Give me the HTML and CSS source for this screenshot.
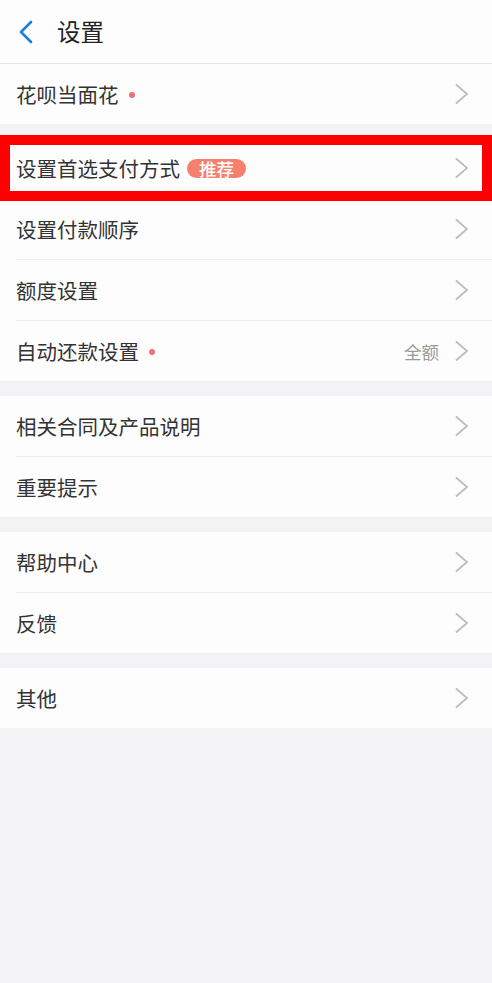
FILE: index.html
```html
<!DOCTYPE html>
<html lang="zh-CN">
<head>
<meta charset="utf-8">
<title>设置</title>
<link rel="stylesheet" href="styles.css">
</head>
<body>
<header class="topbar">
  <svg class="back" width="16" height="24" viewBox="0 0 16 24"><polyline points="13,2 3,12 13,22" fill="none" stroke="#1a7fe0" stroke-width="2.6" stroke-linecap="round" stroke-linejoin="round"/></svg>
  <h1 class="title">设置</h1>
</header>

<section class="group">
  <div class="row"><span class="label">花呗当面花</span><span class="dot"></span><span class="spacer"></span><svg class="chev" width="14" height="22" viewBox="0 0 14 22"><polyline points="1,1.5 12,11 1,20.5" fill="none" stroke="#bdbdbd" stroke-width="1.8"/></svg></div>
</section>

<section class="group">
  <div class="row highlighted"><span class="label">设置首选支付方式</span><span class="badge">推荐</span><span class="spacer"></span><svg class="chev" width="14" height="22" viewBox="0 0 14 22"><polyline points="1,1.5 12,11 1,20.5" fill="none" stroke="#bdbdbd" stroke-width="1.8"/></svg><span class="mark"></span></div>
  <div class="row"><span class="label">设置付款顺序</span><span class="spacer"></span><svg class="chev" width="14" height="22" viewBox="0 0 14 22"><polyline points="1,1.5 12,11 1,20.5" fill="none" stroke="#bdbdbd" stroke-width="1.8"/></svg></div>
  <div class="row"><span class="label">额度设置</span><span class="spacer"></span><svg class="chev" width="14" height="22" viewBox="0 0 14 22"><polyline points="1,1.5 12,11 1,20.5" fill="none" stroke="#bdbdbd" stroke-width="1.8"/></svg></div>
  <div class="row"><span class="label">自动还款设置</span><span class="dot"></span><span class="spacer"></span><span class="value">全额</span><svg class="chev" width="14" height="22" viewBox="0 0 14 22"><polyline points="1,1.5 12,11 1,20.5" fill="none" stroke="#bdbdbd" stroke-width="1.8"/></svg></div>
</section>

<section class="group">
  <div class="row"><span class="label">相关合同及产品说明</span><span class="spacer"></span><svg class="chev" width="14" height="22" viewBox="0 0 14 22"><polyline points="1,1.5 12,11 1,20.5" fill="none" stroke="#bdbdbd" stroke-width="1.8"/></svg></div>
  <div class="row"><span class="label">重要提示</span><span class="spacer"></span><svg class="chev" width="14" height="22" viewBox="0 0 14 22"><polyline points="1,1.5 12,11 1,20.5" fill="none" stroke="#bdbdbd" stroke-width="1.8"/></svg></div>
</section>

<section class="group">
  <div class="row"><span class="label">帮助中心</span><span class="spacer"></span><svg class="chev" width="14" height="22" viewBox="0 0 14 22"><polyline points="1,1.5 12,11 1,20.5" fill="none" stroke="#bdbdbd" stroke-width="1.8"/></svg></div>
  <div class="row"><span class="label">反馈</span><span class="spacer"></span><svg class="chev" width="14" height="22" viewBox="0 0 14 22"><polyline points="1,1.5 12,11 1,20.5" fill="none" stroke="#bdbdbd" stroke-width="1.8"/></svg></div>
</section>

<section class="group">
  <div class="row"><span class="label">其他</span><span class="spacer"></span><svg class="chev" width="14" height="22" viewBox="0 0 14 22"><polyline points="1,1.5 12,11 1,20.5" fill="none" stroke="#bdbdbd" stroke-width="1.8"/></svg></div>
</section>
</body>
</html>
```

FILE: styles.css
```css
* { box-sizing: border-box; }
html, body {
  margin: 0;
  padding: 0;
}
body {
  background: #f3f3f5;
  font-family: "Noto Sans CJK SC", "Noto Sans", sans-serif;
  color: #333;
  min-height: 983px;
}
.topbar {
  height: 64px;
  background: #fdfdfd;
  border-bottom: 1px solid #e6e6e8;
  display: flex;
  align-items: center;
  padding-left: 18px;
}
.back { display: block; margin-top: 1px; }
.title {
  margin: 0 0 0 23px;
  font-size: 23.5px;
  font-weight: normal;
  color: #222;
  line-height: 1;
}
.group {
  background: #fdfdfd;
  margin-top: 14px;
}
.topbar + .group { margin-top: 0; }
.group + .group + .group { margin-top: 15px; }
.row {
  position: relative;
  margin-left: 16px;
  height: 60px;
  padding-right: 23px;
  display: flex;
  align-items: center;
}
.row + .row {
  height: 61px;
  border-top: 1px solid #ececee;
}
.label {
  font-size: 20.5px;
  color: #333;
  line-height: 1;
}
.spacer { flex: 1; }
.dot {
  width: 6px;
  height: 6px;
  border-radius: 50%;
  background: #ec7078;
  margin-left: 10px;
  margin-top: 2px;
}
.badge {
  margin-left: 7px;
  height: 19px;
  line-height: 19px;
  padding: 0 12px;
  border-radius: 10px;
  background: #f5806f;
  color: #fff;
  font-size: 17.5px;
  font-weight: 500;
}
.value {
  font-size: 17.5px;
  color: #9a9a9a;
  margin-right: 16px;
}
.chev { display: block; }
.mark {
  position: absolute;
  z-index: 1;
  left: -16px;
  right: 0;
  top: -3px;
  bottom: -3px;
  border: 10px solid #ff0000;
  pointer-events: none;
}
```
